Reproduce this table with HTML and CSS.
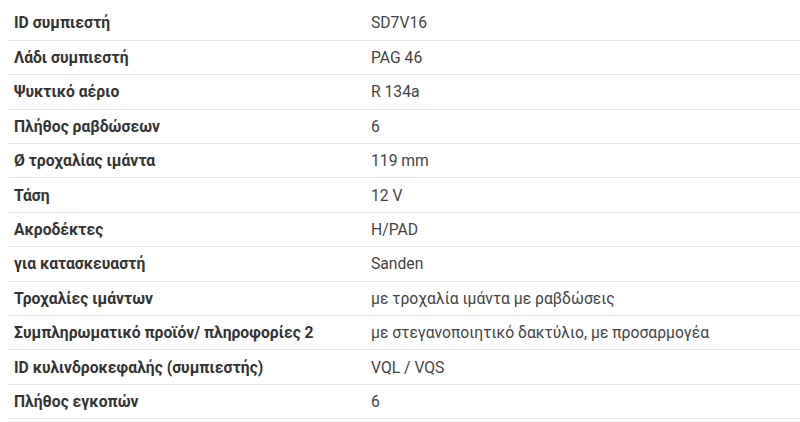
FILE: index.html
```html
<!DOCTYPE html>
<html lang="el">
<head>
<meta charset="utf-8">
<link rel="stylesheet" href="styles.css">
</head>
<body>
<table class="specs">
  <tr><th>ID συμπιεστή</th><td>SD7V16</td></tr>
  <tr><th>Λάδι συμπιεστή</th><td>PAG 46</td></tr>
  <tr><th>Ψυκτικό αέριο</th><td>R 134a</td></tr>
  <tr><th>Πλήθος ραβδώσεων</th><td>6</td></tr>
  <tr><th>Ø τροχαλίας ιμάντα</th><td>119 mm</td></tr>
  <tr><th>Τάση</th><td>12 V</td></tr>
  <tr><th>Ακροδέκτες</th><td>H/PAD</td></tr>
  <tr><th>για κατασκευαστή</th><td>Sanden</td></tr>
  <tr><th>Τροχαλίες ιμάντων</th><td>με τροχαλία ιμάντα με ραβδώσεις</td></tr>
  <tr><th>Συμπληρωματικό προϊόν/ πληροφορίες 2</th><td>με στεγανοποιητικό δακτύλιο, με προσαρμογέα</td></tr>
  <tr><th>ID κυλινδροκεφαλής (συμπιεστής)</th><td>VQL / VQS</td></tr>
  <tr><th>Πλήθος εγκοπών</th><td>6</td></tr>
</table>
</body>
</html>
```

FILE: styles.css
```css
html, body {
  margin: 0;
  padding: 0;
  background: #ffffff;
}
body {
  padding: 6px 0 0 8px;
  font-family: Roboto, "Noto Sans", sans-serif;
  font-size: 15.7px;
}
.specs {
  width: 792px;
  border-collapse: collapse;
}
.specs tr {
  height: 34.4px;
  border-bottom: 1px solid #e6e6e6;
}
.specs th,
.specs td {
  padding: 0 0 0 6px;
  text-align: left;
  vertical-align: middle;
}
.specs th {
  width: 351px;
  font-weight: 700;
  color: #333333;
}
.specs td {
  font-weight: 400;
  color: #444444;
}
```
